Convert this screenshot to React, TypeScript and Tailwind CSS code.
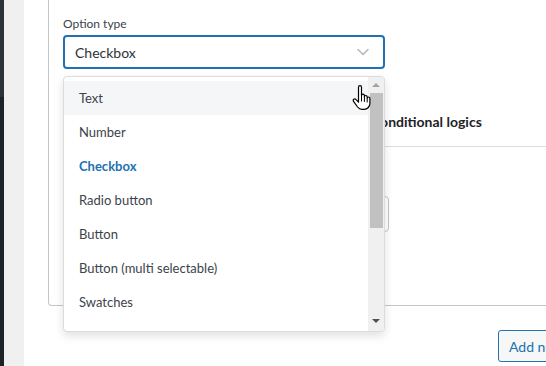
import { ChevronDown } from 'lucide-react'

const options = ['Text', 'Number', 'Checkbox', 'Radio button', 'Button', 'Button (multi selectable)', 'Swatches']

function HandCursor() {
  return (
    <svg width="20" height="26" viewBox="0 0 20 26" className="absolute left-[352px] top-[85px]">
      <path
        d="M6.5 2.2c0-.9.7-1.6 1.5-1.6s1.5.7 1.5 1.6v8.3c.2-.8.8-1.3 1.5-1.3.8 0 1.4.6 1.4 1.4v1c.2-.7.8-1.1 1.4-1.1.8 0 1.4.6 1.4 1.4v1.1c.2-.6.7-1 1.3-1 .8 0 1.4.6 1.4 1.4v4.8c0 3.3-2.3 6.1-5.800 6.1H10c-2 0-3.3-.9-4.4-2.3L1.5 16.3c-.5-.7-.4-1.6.3-2.1.7-.5 1.6-.4 2.1.2l2.6 2.8V2.2z"
        fill="#fff"
        stroke="#000"
        strokeWidth="1.2"
        strokeLinejoin="round"
      />
      <path d="M9.5 11v5M12.4 12v4.5M15.2 13v4" stroke="#000" strokeWidth="1" strokeLinecap="round" />
    </svg>
  )
}

export default function App() {
  return (
    <div className="relative flex h-[366px] w-[546px] overflow-hidden bg-white font-['Lato',sans-serif] text-[#2c3338]">
      <div className="flex w-[4px] flex-col">
        <div className="h-[97px] bg-[#2c3338]" />
        <div className="flex-1 bg-[#1d2327]" />
      </div>
      <div className="w-[20px] bg-[#f0f0f1]" />

      <div className="flex flex-1 flex-col pl-[24px]">
        <div className="h-[306px] rounded-bl-[4px] border-b border-l border-[#c3c4c7] bg-white pl-[14px]">
          <label className="mt-[16px] block text-[12px] leading-[16px] text-[#3c434a]">Option type</label>
          <div className="mt-[3px] flex h-[34px] w-[322px] items-center justify-between rounded-[4px] border-2 border-[#2271b1] pl-[10px] pr-[10px] text-[14px]">
            <span>Checkbox</span>
            <ChevronDown className="h-5 w-5 text-[#b4b7ba]" strokeWidth={1.75} />
          </div>

          <div className="mt-[36px] flex h-[42px] items-end border-b border-[#dcdcde] pl-[308px]">
            <span className="pb-[14px] text-[14px] font-bold text-[#1d2327]">Conditional logics</span>
          </div>

          <div className="mt-[49px] h-[36px] w-[326px] rounded-[4px] border border-[#c3c4c7]" />
        </div>

        <div className="flex justify-end pt-[24px]">
          <button className="h-[32px] w-[110px] shrink-0 translate-x-[62px] whitespace-nowrap rounded-[3px] border border-[#2271b1] bg-[#f6f7f7] pl-[10px] text-left text-[14px] text-[#2271b1]">
            Add new option
          </button>
        </div>
      </div>

      <div className="absolute left-[63px] top-[76px] flex h-[256px] w-[322px] overflow-hidden rounded-[4px] border border-[#dcdcde] bg-white shadow-[0_4px_10px_rgba(0,0,0,0.12)]">
        <ul className="flex-1 pt-[4px] text-[13px]">
          {options.map((o) => (
            <li
              key={o}
              className={`flex h-[34px] items-center pl-[15px] pt-[2px] ${o === 'Text' ? 'bg-[#f5f6f8]' : ''} ${
                o === 'Checkbox' ? 'font-bold text-[#2271b1]' : 'text-[#3c434a]'
              }`}
            >
              {o}
            </li>
          ))}
        </ul>
        <div className="flex w-[16px] flex-col items-center bg-[#f0f0f0]">
          <div className="mt-[6px] h-0 w-0 border-x-[4px] border-b-[4px] border-x-transparent border-b-[#a3a3a3]" />
          <div className="mt-[6px] h-[135px] w-[13px] bg-[#c1c1c1]" />
          <div className="mt-auto mb-[8px] h-0 w-0 border-x-[4px] border-t-[4px] border-x-transparent border-t-[#505050]" />
        </div>
      </div>

      <HandCursor />
    </div>
  )
}
